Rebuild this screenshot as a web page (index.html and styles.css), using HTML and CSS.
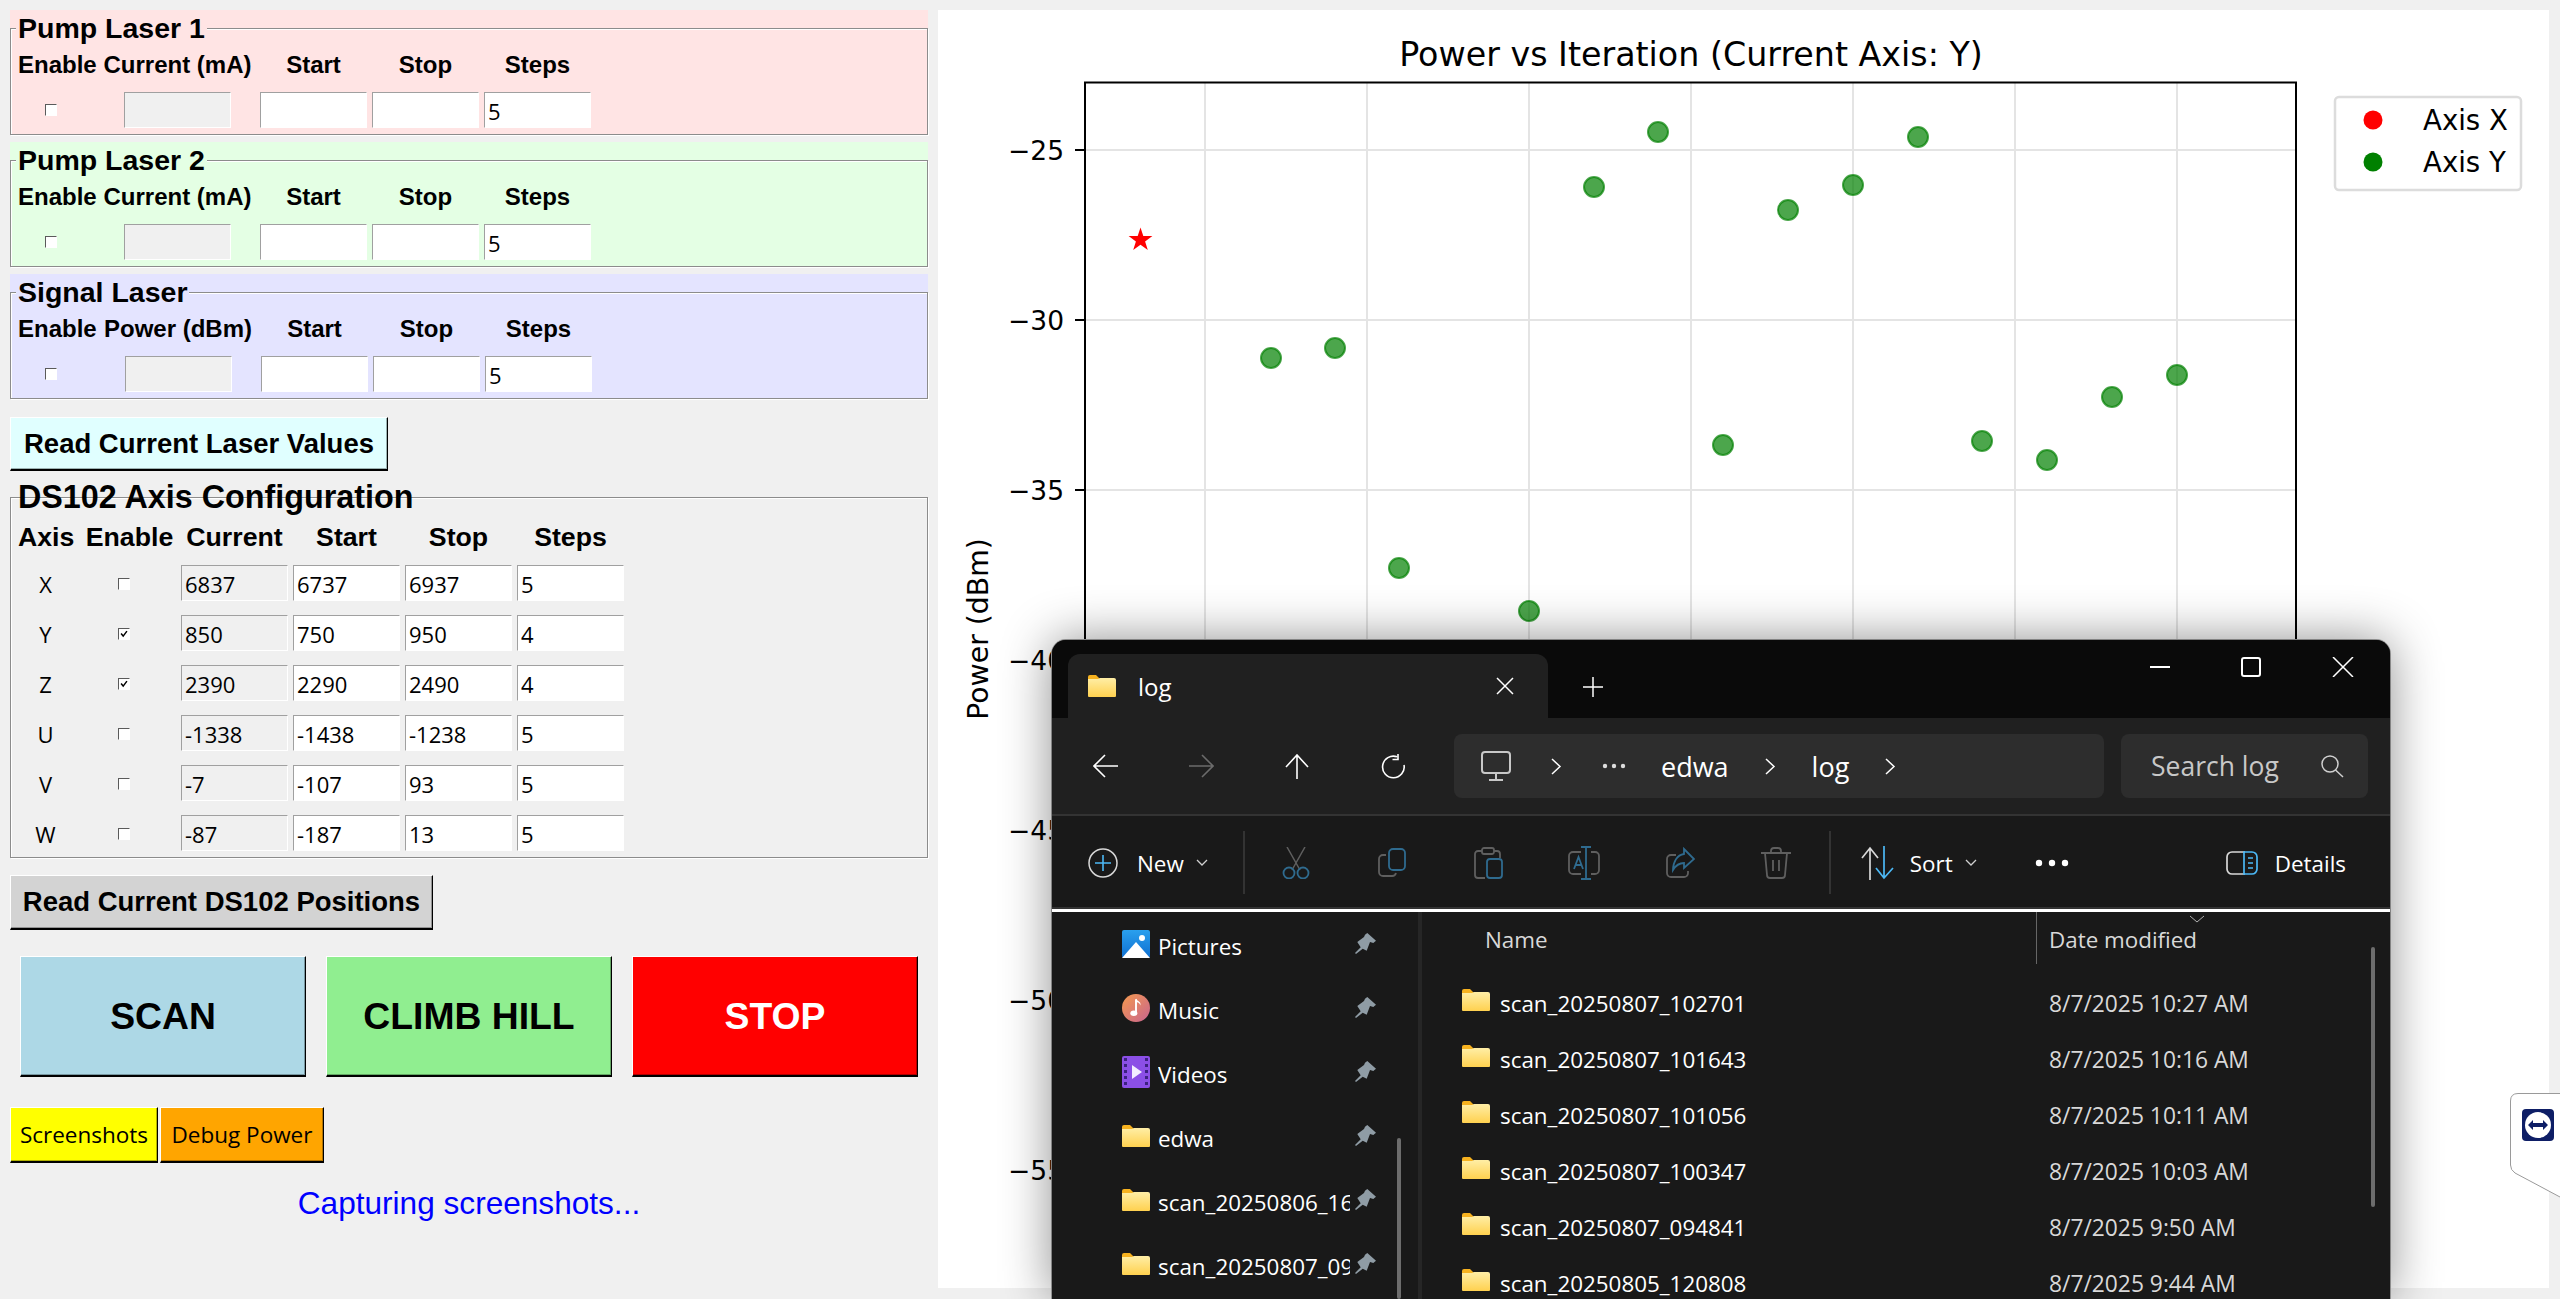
FILE: index.html
```html
<!DOCTYPE html>
<html>
<head>
  <title>Laser Scan Control</title>
  <link rel="stylesheet" href="styles.css">
</head>
<body>
  <svg class="defs" width="0" height="0">
    <defs>
      <linearGradient id="folderFill" x1="0" y1="0" x2="0" y2="1">
        <stop offset="0" stop-color="#ffeea6"/>
        <stop offset="1" stop-color="#ffd14f"/>
      </linearGradient>
      <linearGradient id="picFill" x1="0" y1="0" x2="0" y2="1">
        <stop offset="0" stop-color="#2aa0ee"/>
        <stop offset="1" stop-color="#0f6fd0"/>
      </linearGradient>
      <linearGradient id="musicFill" x1="0" y1="0" x2="1" y2="1">
        <stop offset="0" stop-color="#f59a4e"/>
        <stop offset="1" stop-color="#c8648f"/>
      </linearGradient>
      <symbol id="folder" viewBox="0 0 28 22">
        <path d="M0 2a2 2 0 0 1 2-2h6l4 4H0z" fill="#f7b21f"/>
        <path d="M0 4h10l2-1h14a2 2 0 0 1 2 2v16a1 1 0 0 1-1 1H1a1 1 0 0 1-1-1z" fill="url(#folderFill)"/>
      </symbol>
      <symbol id="pin" viewBox="0 0 22 22">
        <path d="M12.300 0L21 7.700L18.300 10L15 9L11.700 17.700L7.700 15.700L1 21L0 20L5.700 14.300L2.300 9L9 4L10 1.700z" fill="#8f9ca5"/>
      </symbol>
    </defs>
  </svg>

  <div class="app">
    <div class="controls">
      <div class="frame pink">
        <div class="frame-title">Pump Laser 1</div>
        <div class="box">
          <div class="laser-grid">
            <span class="hdr">Enable</span><span class="hdr">Current (mA)</span><span class="hdr">Start</span><span class="hdr">Stop</span><span class="hdr">Steps</span>
            <span class="check"></span>
            <input class="entry readonly" value="" readonly>
            <input class="entry" value="">
            <input class="entry" value="">
            <input class="entry" value="5">
          </div>
        </div>
      </div>
      <div class="frame mint">
        <div class="frame-title">Pump Laser 2</div>
        <div class="box">
          <div class="laser-grid">
            <span class="hdr">Enable</span><span class="hdr">Current (mA)</span><span class="hdr">Start</span><span class="hdr">Stop</span><span class="hdr">Steps</span>
            <span class="check"></span>
            <input class="entry readonly" value="" readonly>
            <input class="entry" value="">
            <input class="entry" value="">
            <input class="entry" value="5">
          </div>
        </div>
      </div>
      <div class="frame lilac">
        <div class="frame-title">Signal Laser</div>
        <div class="box">
          <div class="laser-grid wide">
            <span class="hdr">Enable</span><span class="hdr">Power (dBm)</span><span class="hdr">Start</span><span class="hdr">Stop</span><span class="hdr">Steps</span>
            <span class="check"></span>
            <input class="entry readonly" value="" readonly>
            <input class="entry" value="">
            <input class="entry" value="">
            <input class="entry" value="5">
          </div>
        </div>
      </div>

      <button class="tk-btn read-laser">Read Current Laser Values</button>

      <div class="frame axis-frame">
        <div class="frame-title big">DS102 Axis Configuration</div>
        <div class="box">
          <div class="axis-grid">
            <span class="hdr">Axis</span><span class="hdr">Enable</span><span class="hdr">Current</span><span class="hdr">Start</span><span class="hdr">Stop</span><span class="hdr">Steps</span>

            <span class="axis-name">X</span><span class="check"></span>
            <input class="entry readonly" value="6837" readonly><input class="entry" value="6737"><input class="entry" value="6937"><input class="entry" value="5">

            <span class="axis-name">Y</span><span class="check"><svg viewBox="0 0 12 12"><path d="M2.500 5.500l2.500 3 4.500-6" fill="none" stroke="#000" stroke-width="1.800"/></svg></span>
            <input class="entry readonly" value="850" readonly><input class="entry" value="750"><input class="entry" value="950"><input class="entry" value="4">

            <span class="axis-name">Z</span><span class="check"><svg viewBox="0 0 12 12"><path d="M2.500 5.500l2.500 3 4.500-6" fill="none" stroke="#000" stroke-width="1.800"/></svg></span>
            <input class="entry readonly" value="2390" readonly><input class="entry" value="2290"><input class="entry" value="2490"><input class="entry" value="4">

            <span class="axis-name">U</span><span class="check"></span>
            <input class="entry readonly" value="-1338" readonly><input class="entry" value="-1438"><input class="entry" value="-1238"><input class="entry" value="5">

            <span class="axis-name">V</span><span class="check"></span>
            <input class="entry readonly" value="-7" readonly><input class="entry" value="-107"><input class="entry" value="93"><input class="entry" value="5">

            <span class="axis-name">W</span><span class="check"></span>
            <input class="entry readonly" value="-87" readonly><input class="entry" value="-187"><input class="entry" value="13"><input class="entry" value="5">
          </div>
        </div>
      </div>

      <button class="tk-btn read-ds">Read Current DS102 Positions</button>

      <div class="actions">
        <button class="tk-btn action scan">SCAN</button>
        <button class="tk-btn action climb">CLIMB HILL</button>
        <button class="tk-btn action stop">STOP</button>
      </div>

      <div class="small-btns">
        <button class="tk-btn small shots">Screenshots</button>
        <button class="tk-btn small debug">Debug Power</button>
      </div>

      <div class="status">Capturing screenshots...</div>
    </div>

    <div class="plot-panel">
      <svg class="plot" width="1611" height="1278" viewBox="938 10 1611 1278">
        <g class="grid-lines">
          <path d="M1085 150H2296M1085 320H2296M1085 490H2296M1085 660H2296M1085 830H2296M1085 1000H2296M1085 1170H2296"/>
          <path d="M1205 82V1250M1367 82V1250M1529 82V1250M1691 82V1250M1853 82V1250M2015 82V1250M2177 82V1250"/>
        </g>
        <polygon class="star" transform="translate(1140.500 240)" points="0,-12.500 2.800,-3.900 11.900,-3.900 4.600,1.500 7.300,10.100 0,4.800 -7.300,10.100 -4.600,1.500 -11.900,-3.900 -2.800,-3.900"/>
        <g class="points">
          <circle cx="1271" cy="358" r="10"/>
          <circle cx="1335" cy="348" r="10"/>
          <circle cx="1399" cy="568" r="10"/>
          <circle cx="1529" cy="611" r="10"/>
          <circle cx="1594" cy="187" r="10"/>
          <circle cx="1658" cy="132" r="10"/>
          <circle cx="1723" cy="445" r="10"/>
          <circle cx="1788" cy="210" r="10"/>
          <circle cx="1853" cy="185" r="10"/>
          <circle cx="1918" cy="137" r="10"/>
          <circle cx="1982" cy="441" r="10"/>
          <circle cx="2047" cy="460" r="10"/>
          <circle cx="2112" cy="397" r="10"/>
          <circle cx="2177" cy="375" r="10"/>
        </g>
        <rect class="axes" x="1085" y="82.500" width="1211" height="1168"/>
        <path class="ticks" d="M1075 150H1085M1075 320H1085M1075 490H1085M1075 660H1085M1075 830H1085M1075 1000H1085M1075 1170H1085"/>
        <g class="tick-labels">
          <text x="1064" y="160">−25</text>
          <text x="1064" y="330">−30</text>
          <text x="1064" y="500">−35</text>
          <text x="1064" y="670">−40</text>
          <text x="1064" y="840">−45</text>
          <text x="1064" y="1010">−50</text>
          <text x="1064" y="1180">−55</text>
        </g>
        <text class="plot-title" x="1691" y="66">Power vs Iteration (Current Axis: Y)</text>
        <text class="y-label" transform="translate(988 629) rotate(-90)">Power (dBm)</text>
        <rect class="legend" x="2335" y="97" width="186" height="93" rx="4"/>
        <circle cx="2373" cy="120" r="9.500" fill="#ff0000"/>
        <circle cx="2373" cy="162" r="9.500" fill="#008000"/>
        <text class="legend-text" x="2423" y="130">Axis X</text>
        <text class="legend-text" x="2423" y="172">Axis Y</text>
      </svg>
    </div>
  </div>

  <div class="explorer">
    <div class="titlebar">
      <div class="tab">
        <svg class="folder-ico" width="28" height="22"><use href="#folder"/></svg>
        <span class="tab-name">log</span>
        <svg class="tab-close" width="18" height="18" viewBox="0 0 18 18"><path d="M1 1L17 17M17 1L1 17" stroke="#fff" stroke-width="1.500"/></svg>
      </div>
      <svg class="tab-add" width="20" height="20" viewBox="0 0 20 20"><path d="M10 0V20M0 10H20" stroke="#fff" stroke-width="1.500"/></svg>
      <div class="win-controls">
        <svg width="20" height="20" viewBox="0 0 20 20"><path d="M0 10H20" stroke="#fff" stroke-width="2"/></svg>
        <svg width="20" height="20" viewBox="0 0 20 20"><rect x="1" y="1" width="18" height="18" rx="2" fill="none" stroke="#fff" stroke-width="2"/></svg>
        <svg width="22" height="20" viewBox="0 0 22 20"><path d="M1 0L21 20M21 0L1 20" stroke="#fff" stroke-width="1.500"/></svg>
      </div>
    </div>

    <div class="navbar">
      <div class="nav-btns">
        <span class="nav-btn"><svg width="25" height="24" viewBox="0 0 25 24"><path d="M25 12H2M12 1L1 12L12 23" fill="none" stroke="#fff" stroke-width="1.600"/></svg></span>
        <span class="nav-btn"><svg width="25" height="24" viewBox="0 0 25 24"><path d="M0 12H23M13 1L24 12L13 23" fill="none" stroke="#6b6b6b" stroke-width="1.600"/></svg></span>
        <span class="nav-btn"><svg width="24" height="25" viewBox="0 0 24 25"><path d="M12 25V2M1 13L12 1L23 13" fill="none" stroke="#fff" stroke-width="1.600"/></svg></span>
        <span class="nav-btn"><svg width="24" height="25" viewBox="0 0 24 25"><path d="M16 2.800A10.800 10.800 0 1 0 23 11M17 0V5.500H11.500" fill="none" stroke="#fff" stroke-width="1.600"/></svg></span>
      </div>
      <div class="address">
        <svg class="pc-ico" width="30" height="30" viewBox="0 0 30 30"><rect x="1" y="1" width="28" height="21" rx="3" fill="none" stroke="#c8c8c8" stroke-width="2"/><path d="M15 22V28M8 29H22" stroke="#c8c8c8" stroke-width="2"/></svg>
        <svg class="crumb-sep first" width="11" height="17" viewBox="0 0 11 17"><path d="M1 1L9 8.500L1 16" fill="none" stroke="#fff" stroke-width="1.500"/></svg>
        <svg class="crumb-dots" width="24" height="6" viewBox="0 0 24 6"><circle cx="3" cy="3" r="2.200" fill="#ddd"/><circle cx="12" cy="3" r="2.200" fill="#ddd"/><circle cx="21" cy="3" r="2.200" fill="#ddd"/></svg>
        <span class="crumb edwa">edwa</span>
        <svg class="crumb-sep" width="11" height="17" viewBox="0 0 11 17"><path d="M1 1L9 8.500L1 16" fill="none" stroke="#fff" stroke-width="1.500"/></svg>
        <span class="crumb log">log</span>
        <svg class="crumb-sep" width="11" height="17" viewBox="0 0 11 17"><path d="M1 1L9 8.500L1 16" fill="none" stroke="#fff" stroke-width="1.500"/></svg>
      </div>
      <div class="search">
        <span>Search log</span>
        <svg width="24" height="24" viewBox="0 0 24 24"><circle cx="10" cy="10" r="8" fill="none" stroke="#d0d0d0" stroke-width="1.500"/><path d="M15.500 16L23 23" stroke="#d0d0d0" stroke-width="1.500"/></svg>
      </div>
    </div>

    <div class="cmdbar">
      <div class="cmd new">
        <svg width="30" height="30" viewBox="0 0 30 30"><circle cx="15" cy="15" r="14" fill="none" stroke="#d8d8d8" stroke-width="1.500"/><path d="M15 7V23M7 15H23" stroke="#4cb8f5" stroke-width="1.600"/></svg>
        <span class="cmd-text">New</span>
        <svg class="chev" width="12" height="8" viewBox="0 0 12 8"><path d="M1 1L6 6L11 1" fill="none" stroke="#d0d0d0" stroke-width="1.300"/></svg>
      </div>
      <i class="cmd-sep"></i>
      <div class="cmd-icons">
        <svg width="30" height="32" viewBox="0 0 30 32"><path d="M6 0L19 23M24 0L11 23" stroke="#5f5f5f" stroke-width="1.500"/><circle cx="8" cy="26" r="5.500" fill="none" stroke="#2f6b8f" stroke-width="1.800"/><circle cx="22" cy="26" r="5.500" fill="none" stroke="#2f6b8f" stroke-width="1.800"/></svg>
        <svg width="30" height="32" viewBox="0 0 30 32"><rect x="12" y="2" width="16" height="21" rx="4" fill="none" stroke="#2f6b8f" stroke-width="1.800"/><path d="M9 8H6a4 4 0 0 0-4 4v13a4 4 0 0 0 4 4h9a4 4 0 0 0 4-3" fill="none" stroke="#5f5f5f" stroke-width="1.800"/></svg>
        <svg width="30" height="32" viewBox="0 0 30 32"><path d="M9 4H5a3 3 0 0 0-3 3v21a3 3 0 0 0 3 3h7M21 4h3a3 3 0 0 1 3 3v4" fill="none" stroke="#5f5f5f" stroke-width="1.800"/><rect x="9" y="1" width="12" height="6" rx="2" fill="none" stroke="#5f5f5f" stroke-width="1.800"/><rect x="14" y="12" width="15" height="19" rx="3" fill="none" stroke="#2f6b8f" stroke-width="1.800"/></svg>
        <svg width="34" height="34" viewBox="0 0 34 34"><path d="M14 6H6a4 4 0 0 0-4 4v14a4 4 0 0 0 4 4h8M24 6h4a4 4 0 0 1 4 4v14a4 4 0 0 1-4 4h-4" fill="none" stroke="#5f5f5f" stroke-width="1.800"/><path d="M19 1V33M14 1H24M14 33H24M7 23L11.500 11L16 23M8.500 19H14.500" fill="none" stroke="#2f6b8f" stroke-width="1.800"/></svg>
        <svg width="30" height="32" viewBox="0 0 30 32"><path d="M11 8H6a4 4 0 0 0-4 4v14a4 4 0 0 0 4 4h13a4 4 0 0 0 4-4v-2" fill="none" stroke="#5f5f5f" stroke-width="1.800"/><path d="M19 2L29 12L19 21V16C14 16 11 18 8 23C8 15 12 8 19 7z" fill="none" stroke="#2f6b8f" stroke-width="1.800"/></svg>
        <svg width="30" height="32" viewBox="0 0 30 32"><path d="M0 6H30M10 6V4a3 3 0 0 1 3-3h4a3 3 0 0 1 3 3v2M4 6L6 28a3 3 0 0 0 3 3h12a3 3 0 0 0 3-3L26 6M12 13V24M18 13V24" fill="none" stroke="#5f5f5f" stroke-width="1.800"/></svg>
      </div>
      <i class="cmd-sep"></i>
      <div class="cmd sort">
        <svg width="33" height="34" viewBox="0 0 33 34"><path d="M9 34V2M1 12L9 2L17 12" fill="none" stroke="#d8d8d8" stroke-width="1.700"/><path d="M23 0V32M15 22L23 32L32 22" fill="none" stroke="#4cb8f5" stroke-width="1.700"/></svg>
        <span class="cmd-text">Sort</span>
        <svg class="chev" width="12" height="8" viewBox="0 0 12 8"><path d="M1 1L6 6L11 1" fill="none" stroke="#d0d0d0" stroke-width="1.300"/></svg>
      </div>
      <svg class="more" width="34" height="8" viewBox="0 0 34 8"><circle cx="4" cy="4" r="3.200" fill="#fff"/><circle cx="17" cy="4" r="3.200" fill="#fff"/><circle cx="30" cy="4" r="3.200" fill="#fff"/></svg>
      <div class="cmd details">
        <svg width="32" height="24" viewBox="0 0 32 24"><path d="M19 1H6a5 5 0 0 0-5 5v12a5 5 0 0 0 5 5h13" fill="none" stroke="#d8d8d8" stroke-width="1.700"/><path d="M18 1h8a5 5 0 0 1 5 5v12a5 5 0 0 1-5 5h-8zM22 7H27M22 12H27M22 17H27" fill="none" stroke="#4cb8f5" stroke-width="1.700"/></svg>
        <span class="cmd-text">Details</span>
      </div>
    </div>

    <div class="content">
      <div class="sidebar">
        <div class="side-item">
          <svg class="side-ico" width="28" height="28" viewBox="0 0 28 28"><rect width="28" height="28" rx="2" fill="url(#picFill)"/><circle cx="20" cy="8" r="3" fill="#fff"/><path d="M0 28L14 12L28 28z" fill="#fff"/></svg>
          <span class="side-label">Pictures</span>
          <svg class="pin" width="22" height="22"><use href="#pin"/></svg>
        </div>
        <div class="side-item">
          <svg class="side-ico" width="32" height="32" viewBox="0 0 32 32"><circle cx="16" cy="16" r="16" fill="url(#musicFill)"/><path d="M16 6V21" stroke="#fff" stroke-width="2.200"/><path d="M16 5c2 4 6 3 5 8-1-3-3-4-5-4z" fill="#fff"/><ellipse cx="13.500" cy="22" rx="4" ry="3.200" fill="#fff"/></svg>
          <span class="side-label">Music</span>
          <svg class="pin" width="22" height="22"><use href="#pin"/></svg>
        </div>
        <div class="side-item">
          <svg class="side-ico" width="28" height="32" viewBox="0 0 28 32"><rect width="28" height="32" rx="2" fill="#8b4fe6"/><path d="M2 2h3v3H2zM2 8h3v3H2zM2 14h3v3H2zM2 20h3v3H2zM2 26h3v3H2zM23 2h3v3h-3zM23 8h3v3h-3zM23 14h3v3h-3zM23 20h3v3h-3zM23 26h3v3h-3z" fill="#3c2080"/><path d="M10 9L20 16L10 23z" fill="#f2edff"/></svg>
          <span class="side-label">Videos</span>
          <svg class="pin" width="22" height="22"><use href="#pin"/></svg>
        </div>
        <div class="side-item">
          <svg class="side-ico" width="28" height="22"><use href="#folder"/></svg>
          <span class="side-label">edwa</span>
          <svg class="pin" width="22" height="22"><use href="#pin"/></svg>
        </div>
        <div class="side-item">
          <svg class="side-ico" width="28" height="22"><use href="#folder"/></svg>
          <span class="side-label">scan_20250806_163012</span>
          <svg class="pin" width="22" height="22"><use href="#pin"/></svg>
        </div>
        <div class="side-item">
          <svg class="side-ico" width="28" height="22"><use href="#folder"/></svg>
          <span class="side-label">scan_20250807_094841</span>
          <svg class="pin" width="22" height="22"><use href="#pin"/></svg>
        </div>
        <i class="side-scroll"></i>
      </div>

      <div class="files">
        <div class="file-head">
          <span class="col-name">Name</span>
          <span class="col-date">Date modified</span>
        </div>
        <div class="file-row"><span class="file-name"><svg width="28" height="22"><use href="#folder"/></svg><span>scan_20250807_102701</span></span><span class="file-date">8/7/2025 10:27 AM</span></div>
        <div class="file-row"><span class="file-name"><svg width="28" height="22"><use href="#folder"/></svg><span>scan_20250807_101643</span></span><span class="file-date">8/7/2025 10:16 AM</span></div>
        <div class="file-row"><span class="file-name"><svg width="28" height="22"><use href="#folder"/></svg><span>scan_20250807_101056</span></span><span class="file-date">8/7/2025 10:11 AM</span></div>
        <div class="file-row"><span class="file-name"><svg width="28" height="22"><use href="#folder"/></svg><span>scan_20250807_100347</span></span><span class="file-date">8/7/2025 10:03 AM</span></div>
        <div class="file-row"><span class="file-name"><svg width="28" height="22"><use href="#folder"/></svg><span>scan_20250807_094841</span></span><span class="file-date">8/7/2025 9:50 AM</span></div>
        <div class="file-row"><span class="file-name"><svg width="28" height="22"><use href="#folder"/></svg><span>scan_20250805_120808</span></span><span class="file-date">8/7/2025 9:44 AM</span></div>
        <svg class="sort-chev" width="16" height="8" viewBox="0 0 16 8"><path d="M1 1L8 7L15 1" fill="none" stroke="#b0b0b0" stroke-width="1"/></svg>
        <i class="file-scroll"></i>
      </div>
    </div>
  </div>

  <div class="tv-tab">
    <svg width="50" height="105" viewBox="0 0 50 105">
      <path d="M50 .5H8Q.5 .5 .5 8V72Q.5 77 5 80L50 104" fill="#fff" stroke="#9a9a9a"/>
      <rect x="12" y="16" width="32" height="32" rx="4" fill="#0e1e66"/>
      <circle cx="28" cy="32" r="13" fill="#fff"/>
      <path d="M18 32L23 27V30H33V27L38 32L33 37V34H23V37z" fill="#0e1e66"/>
    </svg>
  </div>
</body>
</html>
```

FILE: styles.css
```css
body {
  margin: 0;
  height: 1299px;
  overflow: hidden;
  position: relative;
  background-color: #f0f0f0;
  font-family: "Liberation Sans", Arial, sans-serif;
}

.defs {
  position: absolute;
}

.app {
  display: flex;
  gap: 10px;
  padding: 10px 11px 0 10px;
}

/* left column */
.controls {
  width: 918px;
  flex: none;
}

.frame {
  padding-top: 18px;
  height: 125px;
  box-sizing: border-box;
  margin-bottom: 7px;
}
.pink { background-color: #ffe4e4; }
.mint { background-color: #e4ffe4; }
.lilac { background-color: #e4e4ff; }

.frame-title {
  position: relative;
  z-index: 1;
  width: fit-content;
  margin: -16px 0 -16px 6px;
  padding: 0 2px;
  font-size: 28.500px;
  line-height: 32px;
  font-weight: bold;
  color: #000;
  background: none;
}
.frame-title::before {
  content: "";
  position: absolute;
  z-index: -1;
  left: 0;
  right: 0;
  top: 14px;
  height: 4px;
}
.pink .frame-title::before { background-color: #ffe4e4; }
.mint .frame-title::before { background-color: #e4ffe4; }
.lilac .frame-title::before { background-color: #e4e4ff; }
.axis-frame .frame-title::before { background-color: #f0f0f0; }

.box {
  height: 107px;
  box-sizing: border-box;
  border: 1px solid #8c8c8c;
  box-shadow: inset 1px 1px 0 #fff, 1px 1px 0 #fff;
  padding: 21px 0 0 7px;
}

.hdr {
  font-size: 24px;
  line-height: 30px;
  font-weight: bold;
  text-align: center;
  white-space: nowrap;
}

.laser-grid {
  display: grid;
  grid-template-columns: 77px 155px 107px 107px 107px;
  column-gap: 5px;
  row-gap: 12px;
  align-items: center;
}
.laser-grid.wide {
  grid-template-columns: 77px 156px 107px 107px 107px;
}
.laser-grid .readonly {
  justify-self: center;
}

.check {
  display: block;
  width: 12px;
  height: 12px;
  margin-left: 27px;
  box-sizing: border-box;
  background-color: #fff;
  border-style: solid;
  border-width: 1px;
  border-color: #5a5a5a #fff #fff #5a5a5a;
}
.check svg {
  display: block;
  width: 10px;
  height: 10px;
}

.entry {
  display: block;
  width: 107px;
  height: 36px;
  box-sizing: border-box;
  margin: 0;
  padding: 1px 0 0 3px;
  border-style: solid;
  border-width: 1px;
  border-color: #a0a0a0 #fff #fff #a0a0a0;
  border-radius: 0;
  outline: none;
  background-color: #fff;
  font-family: "Open Sans", sans-serif;
  font-size: 22px;
  color: #000;
}
.entry.readonly {
  background-color: #f0f0f0;
}

.tk-btn {
  display: block;
  box-sizing: border-box;
  margin: 0;
  padding: 0;
  border-style: solid;
  border-width: 1px 1px 2px 1px;
  border-color: #ffffff #000 #000 #ffffff;
  box-shadow: inset -1px -1px 0 rgba(0, 0, 0, .3);
  font-family: "Liberation Sans", Arial, sans-serif;
  font-weight: bold;
  color: #000;
}

.read-laser {
  width: 378px;
  height: 54px;
  margin-top: 18px;
  background-color: #e0ffff;
  font-size: 27.500px;
}

.axis-frame {
  height: auto;
  margin: 26px 0 0;
  background: none;
  padding-top: 0;
}
.frame-title.big {
  margin: -18px 0 0 6px;
  font-size: 32.300px;
  line-height: 36px;
}
.axis-frame .box {
  height: 361px;
  margin-top: -18px;
  padding-top: 23px;
}

.axis-grid {
  display: grid;
  grid-template-columns: 60px 93px 107px 107px 107px 107px;
  grid-template-rows: 44px;
  grid-auto-rows: 50px;
  column-gap: 5px;
  align-items: start;
}
.axis-grid .hdr {
  font-size: 26.700px;
  line-height: 34px;
  margin-top: -1px;
}
.axis-grid .hdr:first-child {
  text-align: left;
}
.axis-grid .check {
  margin: 13px 0 0 35px;
}

.axis-name {
  font-family: "Open Sans", sans-serif;
  font-size: 22px;
  line-height: 36px;
  text-align: center;
  padding: 1px 5px 0 0;
}

.read-ds {
  width: 423px;
  height: 55px;
  margin-top: 17px;
  background-color: #d3d3d3;
  font-size: 27.500px;
}

.actions {
  display: flex;
  gap: 20px;
  padding-left: 10px;
  margin-top: 26px;
}
.action {
  width: 286px;
  height: 121px;
  font-size: 37.300px;
}
.scan { background-color: #add8e6; }
.climb { background-color: #90ee90; }
.stop { background-color: #ff0000; color: #fff; }

.small-btns {
  display: flex;
  gap: 2px;
  margin-top: 30px;
}
.small {
  height: 56px;
  font-family: "Open Sans", sans-serif;
  font-size: 22.500px;
  font-weight: normal;
}
.shots { width: 148px; background-color: #ffff00; }
.debug { width: 164px; background-color: #ffa500; }

.status {
  margin-top: 21px;
  text-align: center;
  font-size: 31.600px;
  line-height: 38px;
  color: #0000ff;
}

/* plot */
.plot-panel {
  width: 1611px;
  height: 1278px;
  background-color: #fff;
}
.plot {
  display: block;
  font-family: "DejaVu Sans", sans-serif;
}
.grid-lines path {
  stroke: #e4e4e4;
  stroke-width: 2;
  fill: none;
}
.star { fill: #ff0000; }
.points circle {
  fill: #008000;
  fill-opacity: .7;
  stroke: #008000;
  stroke-opacity: .7;
  stroke-width: 2;
}
.axes {
  fill: none;
  stroke: #000;
  stroke-width: 2;
}
.ticks {
  stroke: #000;
  stroke-width: 2;
}
.tick-labels text {
  font-size: 26.500px;
  text-anchor: end;
}
.plot-title {
  font-size: 33.300px;
  text-anchor: middle;
}
.y-label {
  font-size: 28.300px;
  text-anchor: middle;
}
.legend {
  fill: #fff;
  stroke: #dcdcdc;
  stroke-width: 2.500;
}
.legend-text {
  font-size: 27.600px;
}

/* explorer window, sits over the plot like on a desktop */
.explorer {
  position: absolute;
  left: 1052px;
  top: 640px;
  width: 1338px;
  height: 659px;
  display: flex;
  flex-direction: column;
  border-radius: 14px 14px 0 0;
  overflow: hidden;
  background-color: #191919;
  box-shadow: 0 0 50px rgba(0, 0, 0, .45), 0 0 0 1px #a8a8a8;
  font-family: "Open Sans", sans-serif;
  color: #fff;
}

.titlebar {
  height: 78px;
  flex: none;
  display: flex;
  align-items: flex-end;
  padding-left: 16px;
  background-color: #0a0a0a;
}
.tab {
  width: 480px;
  height: 64px;
  box-sizing: border-box;
  display: flex;
  align-items: center;
  padding: 0 34px 0 20px;
  border-radius: 12px 12px 0 0;
  background-color: #202020;
}
.tab-name {
  margin-left: 22px;
  font-size: 24px;
  flex: 1;
}
.tab-add {
  margin: 0 0 21px 35px;
}
.win-controls {
  margin-left: auto;
  display: flex;
  align-items: center;
  gap: 71px;
  height: 78px;
  padding-right: 36px;
  padding-bottom: 24px;
  box-sizing: border-box;
}

.navbar {
  height: 98px;
  flex: none;
  box-sizing: border-box;
  border-bottom: 2px solid #333;
  display: flex;
  align-items: center;
  padding-left: 5px;
  background-color: #202020;
}
.nav-btns {
  display: flex;
}
.nav-btn {
  width: 96px;
  display: flex;
  justify-content: center;
}
.address {
  width: 650px;
  height: 64px;
  margin-left: 13px;
  display: flex;
  align-items: center;
  border-radius: 8px;
  background-color: #2d2d2d;
  padding-left: 27px;
  box-sizing: border-box;
}
.crumb {
  font-size: 27px;
  color: #fff;
}
.crumb-sep.first {
  margin-left: 40px;
}
.crumb-dots {
  margin: 0 35px 0 40px;
}
.edwa + .crumb-sep {
  margin: 0 36px;
}
.crumb.log {
  margin-right: 36px;
}
.search {
  width: 247px;
  height: 64px;
  margin-left: 17px;
  box-sizing: border-box;
  padding: 0 24px 0 30px;
  display: flex;
  align-items: center;
  justify-content: space-between;
  border-radius: 8px;
  background-color: #2d2d2d;
  font-size: 26.500px;
  color: #c8c8c8;
}

.cmdbar {
  height: 96px;
  flex: none;
  box-sizing: border-box;
  border-bottom: 3px solid #fff;
  box-shadow: inset 0 -2px 0 #333;
  display: flex;
  align-items: center;
  padding-left: 36px;
  background-color: #191919;
}
.cmd {
  display: flex;
  align-items: center;
}
.cmd-text {
  font-size: 22.400px;
  padding-top: 2px;
  color: #fff;
}
.new .cmd-text { margin-left: 19px; }
.new .chev { margin-left: 12px; }
.cmd-sep {
  width: 2px;
  height: 63px;
  flex: none;
  background-color: #333;
}
.new + .cmd-sep { margin-left: 35px; }
.cmd-icons {
  display: grid;
  grid-template-columns: repeat(6, 96px);
  justify-items: center;
  align-items: center;
  margin: 0 5px 0 3px;
}
.sort { margin-left: 30px; }
.sort .cmd-text { margin-left: 16px; }
.sort .chev { margin-left: 12px; }
.more { margin-left: 58px; }
.details { margin-left: auto; padding-right: 44px; }
.details .cmd-text { margin-left: 17px; }

.content {
  flex: 1;
  display: flex;
  min-height: 0;
}
.sidebar {
  width: 370px;
  flex: none;
  box-sizing: border-box;
  border-right: 4px solid #262626;
  position: relative;
}
.side-item {
  height: 64px;
  display: flex;
  align-items: center;
  padding-left: 70px;
  font-size: 22.400px;
}
.side-ico {
  width: 28px;
  flex: none;
  overflow: visible;
}
.side-label {
  width: 192px;
  margin-left: 8px;
  overflow: hidden;
  white-space: nowrap;
  padding-top: 4px;
}
.pin {
  margin-left: 5px;
  flex: none;
}
.side-scroll {
  position: absolute;
  left: 345px;
  top: 226px;
  width: 4px;
  bottom: 0;
  background-color: #6d6d6d;
  border-radius: 2px;
}

.files {
  flex: 1;
  position: relative;
  font-size: 22.400px;
}
.file-head,
.file-row {
  display: grid;
  grid-template-columns: 614px 1fr;
}
.file-head {
  height: 60px;
  color: #d8d8d8;
}
.col-name {
  padding: 12px 0 0 63px;
}
.col-date {
  height: 52px;
  box-sizing: border-box;
  border-left: 1px solid #666;
  padding: 12px 0 0 12px;
}
.file-row {
  height: 56px;
  align-items: center;
}
.file-name {
  display: flex;
  align-items: center;
  padding-left: 40px;
}
.file-name span {
  margin-left: 10px;
  padding-top: 6px;
}
.file-date {
  padding: 6px 0 0 13px;
  font-size: 22.800px;
  color: #d8d8d8;
}
.sort-chev {
  position: absolute;
  left: 767px;
  top: 3px;
}
.file-scroll {
  position: absolute;
  left: 949px;
  top: 35px;
  width: 4px;
  height: 260px;
  background-color: #6d6d6d;
  border-radius: 2px;
}

.tv-tab {
  position: absolute;
  left: 2510px;
  top: 1093px;
  width: 50px;
  height: 105px;
}
.tv-tab svg {
  display: block;
}
```
